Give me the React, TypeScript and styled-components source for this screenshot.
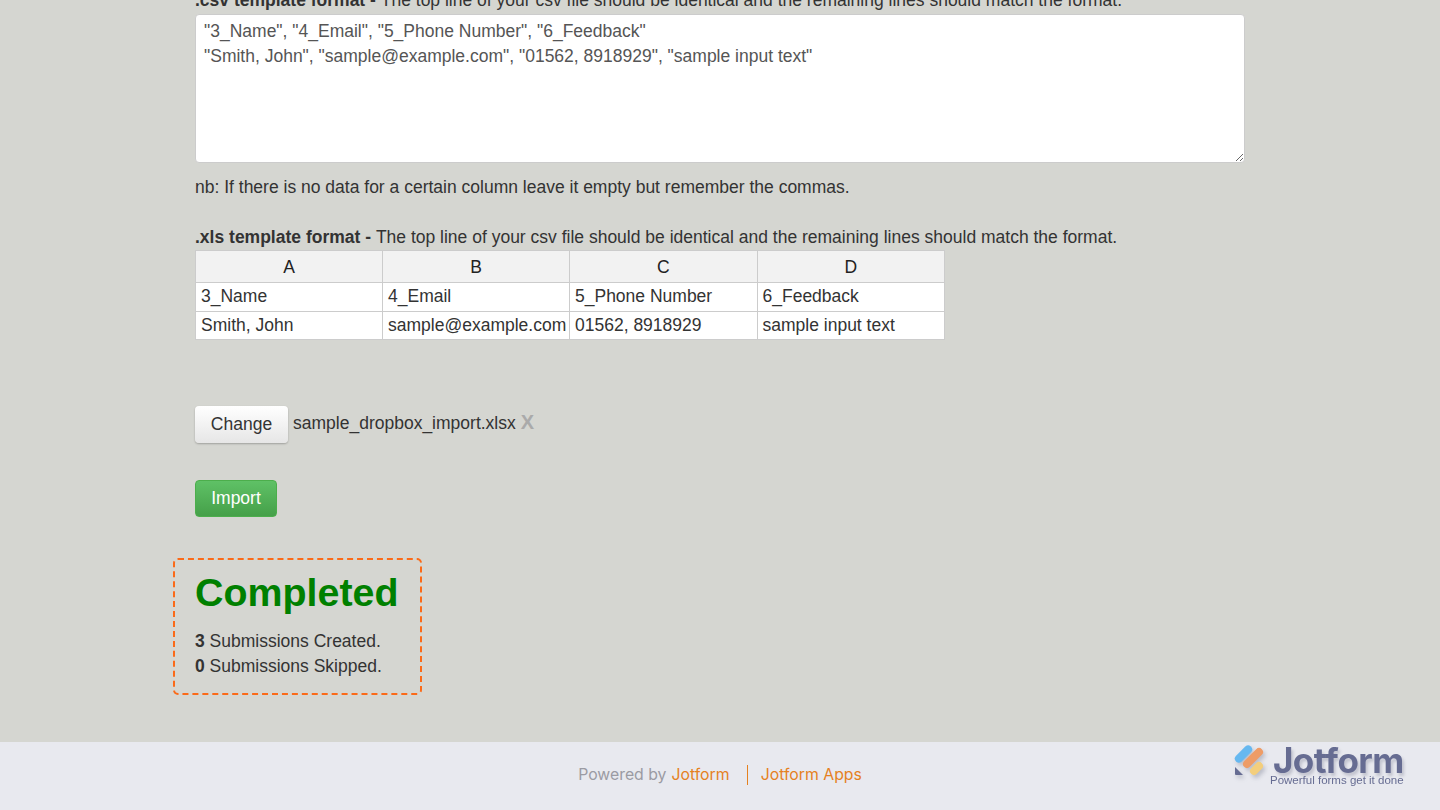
import styled, { createGlobalStyle } from "styled-components";

const GlobalStyle = createGlobalStyle`
  html, body {
    margin: 0;
    padding: 0;
    height: 810px;
    overflow: hidden;
    background: #d5d6d1;
  }
`;

const Page = styled.div`
  display: flex;
  flex-direction: column;
  height: 810px;
  overflow: hidden;
  font-family: "Liberation Sans", Arial, sans-serif;
  font-size: 17.5px;
  line-height: 25px;
  color: #333;
`;

const Main = styled.main`
  flex: 1;
  min-height: 0;
  width: 1050px;
  margin-left: 195px;
  margin-top: -12px;
`;

const FormatLine = styled.div`
  height: 25px;
  white-space: nowrap;
`;

const TemplateBox = styled.textarea`
  display: block;
  box-sizing: border-box;
  width: 1050px;
  height: 149px;
  margin: 1px 0 0;
  padding: 4px 8px;
  border: 1px solid #ccc;
  border-radius: 4px;
  background: #fff;
  color: #555;
  font: inherit;
  outline: none;
  resize: vertical;
`;

const Note = styled.p`
  margin: 12px 0 0;
`;

const XlsLine = styled(FormatLine)`
  margin-top: 25px;
`;

const SheetTable = styled.table`
  width: 750px;
  border-collapse: collapse;
  table-layout: fixed;
  background: #fff;

  tbody tr:last-child td {
    height: 27px;
    padding-bottom: 0;
  }
`;

const HeadCell = styled.th`
  height: 29px;
  padding: 2px 0 0;
  border: 1px solid #ccc;
  background: #f2f2f2;
  color: #222;
  font-weight: 400;
  text-align: center;

  &:nth-child(-n + 2) {
    width: 186px;
  }
`;

const Cell = styled.td`
  height: 26px;
  padding: 0 0 2px 5px;
  border: 1px solid #ccc;
  white-space: nowrap;
`;

const FileRow = styled.div`
  display: flex;
  align-items: center;
  gap: 5px;
  margin-top: 66px;
`;

const ChangeButton = styled.button`
  width: 93px;
  height: 37px;
  padding: 0;
  border: 0;
  border-radius: 4px;
  background: linear-gradient(#fff, #e6e6e6);
  box-shadow: 0 1px 2px rgba(0, 0, 0, 0.25);
  color: #333;
  font: inherit;
`;

const FileName = styled.span`
  margin-top: -3px;
`;

const RemoveMark = styled.b`
  color: #aaa;
  font-size: 20px;
  margin-left: 5px;
`;

const ImportButton = styled.button`
  display: block;
  width: 82px;
  height: 37px;
  margin-top: 37px;
  padding: 0;
  border: 1px solid #4cae4c;
  border-radius: 4px;
  background: linear-gradient(#5fc166, #45a049);
  color: #fff;
  font: inherit;
`;

const ResultBox = styled.section`
  box-sizing: border-box;
  width: 249px;
  height: 137px;
  margin: 41px 0 0 -22px;
  padding: 10px 20px 0;
  border: 2px dashed #fb6a18;
  border-radius: 5px;
`;

const ResultTitle = styled.h2`
  margin: 0 0 15px;
  color: #008000;
  font-size: 39.4px;
  line-height: 44px;
  font-weight: 700;
`;

const Footer = styled.footer`
  position: relative;
  display: flex;
  align-items: center;
  justify-content: center;
  box-sizing: border-box;
  height: 68px;
  flex: none;
  padding-bottom: 4px;
  background: #e8e9ef;
  font-family: Inter, sans-serif;
  font-size: 15.8px;
  color: #9b9ba3;
`;

const FooterLink = styled.a`
  color: #e5811f;
  text-decoration: none;
  margin-left: 5px;
`;

const FooterDivider = styled.span`
  width: 1px;
  height: 20px;
  margin: 2px 13px 0 17px;
  background: #e5811f;
`;

const AppsLink = styled(FooterLink)`
  margin-left: 0;
`;

const Logo = styled.div`
  position: absolute;
  left: 1234px;
  top: 2px;
  display: flex;
  gap: 3px;
`;

const LogoMark = styled.svg`
  width: 33px;
  height: 36px;
  filter: drop-shadow(2px 3px 2px rgba(80, 85, 110, 0.3)) blur(0.4px);
`;

const LogoText = styled.div`
  display: flex;
  flex-direction: column;
  font-family: Inter, "Liberation Sans", sans-serif;
  color: #666c92;
  filter: blur(0.4px);
`;

const LogoName = styled.span`
  font-size: 35px;
  line-height: 26px;
  font-weight: 700;
  letter-spacing: -0.6px;
  margin-left: 3px;
  padding-top: 3px;
  text-shadow: 2px 3px 3px rgba(80, 85, 110, 0.25);
`;

const LogoTag = styled.span`
  margin-top: 1px;
  font-family: "Liberation Sans", Arial, sans-serif;
  font-size: 11.5px;
  line-height: 12px;
`;

const columns = ["A", "B", "C", "D"];
const rows = [
  ["3_Name", "4_Email", "5_Phone Number", "6_Feedback"],
  ["Smith, John", "sample@example.com", "01562, 8918929", "sample input text"],
];
const csvSample =
  '"3_Name", "4_Email", "5_Phone Number", "6_Feedback"\n"Smith, John", "sample@example.com", "01562, 8918929", "sample input text"';

export default function App() {
  return (
    <Page>
      <GlobalStyle />
      <Main>
        <FormatLine>
          <b>.csv template format - </b>
          The top line of your csv file should be identical and the remaining lines should match the format.
        </FormatLine>
        <TemplateBox readOnly value={csvSample} />
        <Note>nb: If there is no data for a certain column leave it empty but remember the commas.</Note>
        <XlsLine>
          <b>.xls template format - </b>
          The top line of your csv file should be identical and the remaining lines should match the format.
        </XlsLine>
        <SheetTable>
          <thead>
            <tr>
              {columns.map((c) => (
                <HeadCell key={c}>{c}</HeadCell>
              ))}
            </tr>
          </thead>
          <tbody>
            {rows.map((row) => (
              <tr key={row[0]}>
                {row.map((v) => (
                  <Cell key={v}>{v}</Cell>
                ))}
              </tr>
            ))}
          </tbody>
        </SheetTable>
        <FileRow>
          <ChangeButton type="button">Change</ChangeButton>
          <FileName>
            sample_dropbox_import.xlsx<RemoveMark>X</RemoveMark>
          </FileName>
        </FileRow>
        <ImportButton type="button">Import</ImportButton>
        <ResultBox>
          <ResultTitle>Completed</ResultTitle>
          <div>
            <b>3</b> Submissions Created.
          </div>
          <div>
            <b>0</b> Submissions Skipped.
          </div>
        </ResultBox>
      </Main>
      <Footer>
        Powered by<FooterLink href="#">Jotform</FooterLink>
        <FooterDivider />
        <AppsLink href="#">Jotform Apps</AppsLink>
        <Logo>
          <LogoMark viewBox="0 0 33 36">
            <rect x="-4" y="-10.5" width="8" height="21" rx="4" fill="#66b8f0" transform="translate(9.5 10) rotate(45)" />
            <rect x="-4" y="-12.5" width="8" height="25" rx="4" fill="#ee9c66" transform="translate(19 14) rotate(45)" />
            <rect x="-4" y="-7.5" width="8" height="15" rx="4" fill="#f3ce7c" transform="translate(22.5 24.5) rotate(45)" />
            <path d="M1 23 L9 31 H2 Q1 31 1 30 Z" fill="#666c92" />
          </LogoMark>
          <LogoText>
            <LogoName>Jotform</LogoName>
            <LogoTag>Powerful forms get it done</LogoTag>
          </LogoText>
        </Logo>
      </Footer>
    </Page>
  );
}
